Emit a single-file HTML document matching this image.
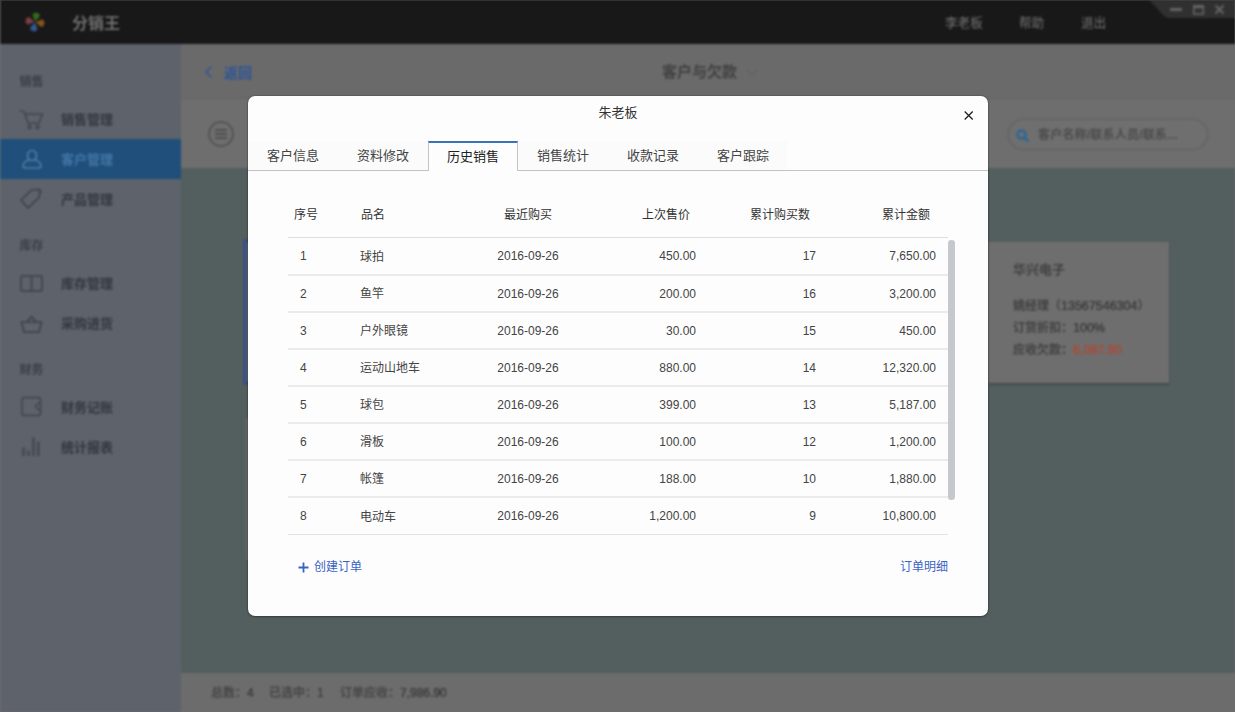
<!DOCTYPE html>
<html lang="zh-CN">
<head>
<meta charset="utf-8">
<title>分销王</title>
<style>
*{box-sizing:border-box;margin:0;padding:0}
html,body{width:1235px;height:712px;overflow:hidden;background:#535e5e}
body{font-family:"Liberation Sans","Noto Sans CJK SC",sans-serif;position:relative}
#bg{position:absolute;left:-10px;top:-10px;width:1255px;height:732px;filter:blur(.9px);background:#535e5e}
#bg .abs{position:absolute}
#topbar{left:0;top:0;width:1255px;height:54px;background:#181818}
#side{left:0;top:54px;width:191px;height:678px;background:#5d626b}
#head{left:191px;top:54px;width:1064px;height:55px;background:#6a6a6a;border-bottom:1px solid #646464}
#tool{left:191px;top:109px;width:1064px;height:69px;background:#6e6e6e}
#foot{left:191px;top:683px;width:1064px;height:50px;background:#6c6c6c}
.t{position:absolute;white-space:nowrap;line-height:1}
.sec{font-size:12px;color:#3b3f46;font-weight:bold;left:29.500px}
.it{font-size:13px;color:#33373d;font-weight:bold;left:71px}
#sel{left:0;top:149px;width:191px;height:40px;background:#1f4f7a}
#modal{position:absolute;left:248px;top:96px;width:740px;height:520px;background:#fdfdfd;border-radius:7px;box-shadow:0 0 1.500px rgba(0,0,0,.55),0 1px 2px rgba(0,0,0,.25)}
#mtitle{position:absolute;left:0;width:740px;top:9px;text-align:center;font-size:13px;line-height:16px;color:#333}
#close{position:absolute;left:715px;top:14px}
#tabs{position:absolute;left:0;top:45px;width:740px;height:30px;border-bottom:1px solid #c3c3c3}
#tabs .strip{position:absolute;left:0;top:0;width:539px;height:29px;background:#fbfbfb}
.tab{position:absolute;top:0;height:30px;width:90px;text-align:center;font-size:13px;line-height:30px;color:#444}
.tab.on{background:#fdfdfd;border:1px solid #c3c3c3;border-top:2px solid #3a74b8;border-bottom:none;color:#222;line-height:27px;height:30px}
table{position:absolute;left:40px;top:104px;width:660px;border-collapse:separate;border-spacing:0;table-layout:fixed;font-size:12px;color:#444}
th{font-weight:normal;height:38px;color:#333;border-bottom:1px solid #dedede;padding-bottom:11px;box-sizing:border-box}
td{height:37px;border-bottom:2px solid #ebebeb;box-sizing:border-box}
tr:first-child td{height:38px}
tr:last-child td{border-bottom:1px solid #e3e3e3}
.c1{width:70px;text-align:left;padding-left:6px}
td.c1{padding-left:12px}
td.c2{padding-bottom:2px}
.c2{width:100px;text-align:left;padding-left:2px}
.c3{text-align:center;width:140px}
.c4{width:98px}.c5{width:120px}.c6{width:132px}
.r{text-align:right}
th.c4,th.c5{padding-right:6px}
th.c6{padding-right:18px}
td.c6{padding-right:12px}
#sb{position:absolute;left:700px;top:144px;width:6.500px;height:260px;border-radius:3.250px;background:#c5c9cd}
.ft{top:697px;font-size:12px;font-weight:bold;color:#454545}
.ft .n{font-size:12px}
.n{font-weight:normal;font-size:12.500px;color:#383838;text-shadow:0 0 .5px #383838}
.lnk{position:absolute;font-size:12px;color:#3a62c4;line-height:14px;top:464px}
th.c2{padding-left:3px}
</style>
</head>
<body>
<div id="bg">
  <div class="abs" id="topbar"></div>
  <div class="abs" id="side"></div>
  <div class="abs" id="sel"></div>
  <div class="abs" id="head"></div>
  <div class="abs" id="tool"></div>
  <div class="abs" id="foot"></div>

  <!-- top bar -->
  <svg class="abs" style="left:33px;top:19.800px" width="24" height="24" viewBox="0 0 24 24">
    <g transform="translate(12 12) scale(.9) rotate(10) translate(-12 -12)">
    <path d="M12 11.500 L8 5 Q8 1.500 12 1.500 Q16 1.500 16 5 Z" fill="#336b19"/>
    <path d="M12.500 12 L19 8 Q22.500 8 22.500 12 Q22.500 16 19 16 Z" fill="#87531b"/>
    <path d="M12 12.500 L16 19 Q16 22.500 12 22.500 Q8 22.500 8 19 Z" fill="#325a93"/>
    <path d="M11.500 12 L5 16 Q1.500 16 1.500 12 Q1.500 8 5 8 Z" fill="#7f3d43"/>
    </g>
  </svg>
  <div class="t" style="left:82px;top:26px;font-size:16px;font-weight:bold;color:#6f6f6f">分销王</div>
  <div class="t" style="left:955px;top:26.700px;font-size:12.600px;color:#757575">李老板</div>
  <div class="t" style="left:1029px;top:26.700px;font-size:12.600px;color:#757575">帮助</div>
  <div class="t" style="left:1091px;top:26.700px;font-size:12.600px;color:#757575">退出</div>
  <svg class="abs" style="left:1155px;top:10px" width="100" height="18" viewBox="0 0 100 18">
    <path d="M4 0 H100 V18.500 H27 Q19.500 18.500 14.500 11 Z" fill="#303030"/>
    <rect x="25" y="8" width="12" height="3" fill="#646464"/>
    <rect x="48.800" y="6" width="9.500" height="8" fill="none" stroke="#646464" stroke-width="1.600"/>
    <rect x="48" y="5.200" width="11" height="3" fill="#646464"/>
    <path d="M70.500 5.500 L78.500 13.500 M78.500 5.500 L70.500 13.500" stroke="#646464" stroke-width="2.200"/>
  </svg>

  <!-- sidebar -->
  <div class="t sec" style="top:86px">销售</div>
  <div class="t it" style="top:123px">销售管理</div>
  <div class="t it" style="top:163px;color:#4676a6">客户管理</div>
  <div class="t it" style="top:203px">产品管理</div>
  <div class="t sec" style="top:250px">库存</div>
  <div class="t it" style="top:287px">库存管理</div>
  <div class="t it" style="top:327px">采购进货</div>
  <div class="t sec" style="top:374px">财务</div>
  <div class="t it" style="top:411px">财务记账</div>
  <div class="t it" style="top:451px">统计报表</div>

  <!-- icons -->
  <svg class="abs" style="left:28px;top:118px" width="28" height="24" viewBox="0 0 28 24" fill="none" stroke="#3c4047" stroke-width="1.250" stroke-linecap="round" stroke-linejoin="round">
    <path d="M2 2.500 L6 3.500 L10 15 H21 L24.500 6 H8"/><circle cx="11.500" cy="19" r="1.600"/><circle cx="19.500" cy="19" r="1.600"/>
  </svg>
  <svg class="abs" style="left:30px;top:158px" width="24" height="24" viewBox="0 0 24 24" fill="none" stroke="#6b8fb9" stroke-width="1.100" stroke-linecap="round" stroke-linejoin="round">
    <ellipse cx="12" cy="7.500" rx="4.500" ry="5.200"/><path d="M8.500 12 Q3 14 3 18 Q3 20 6 20 H18 Q21 20 21 18 Q21 14 15.500 12"/>
  </svg>
  <svg class="abs" style="left:29px;top:197px" width="26" height="24" viewBox="0 0 26 24" fill="none" stroke="#3c4047" stroke-width="1.500" stroke-linejoin="round">
    <path d="M2 13 L12.500 3 L20 2.500 Q21.500 2.500 21 4.500 L20 10.500 L9 21 Z"/><path d="M19 2 L22.500 5.500"/>
  </svg>
  <svg class="abs" style="left:29px;top:283px" width="26" height="22" viewBox="0 0 26 22" fill="none" stroke="#3c4047" stroke-width="1.500" stroke-linejoin="round">
    <rect x="2" y="3" width="21" height="15" rx="1"/><path d="M12.500 3 V18"/>
  </svg>
  <svg class="abs" style="left:29px;top:324px" width="26" height="22" viewBox="0 0 26 22" fill="none" stroke="#3c4047" stroke-width="1.500" stroke-linejoin="round" stroke-linecap="round">
    <path d="M2.500 8 H22.500 L20 18 H5 Z"/><path d="M8 8 L12.500 2.500 L17 8"/>
  </svg>
  <svg class="abs" style="left:29.500px;top:405px" width="24" height="24" viewBox="0 0 24 24" fill="none" stroke="#40444b" stroke-width="1.500" stroke-linejoin="round">
    <rect x="2" y="2.500" width="18.500" height="18" rx="2.500"/><path d="M20.500 8.500 H18 L15.500 11.500 L18 14.500 H20.500" stroke-width="1.300"/>
  </svg>
  <svg class="abs" style="left:30px;top:446px" width="24" height="24" viewBox="0 0 24 24" fill="none" stroke="#454950" stroke-width="2.600">
    <path d="M3.600 11.500 V20 M8.500 14.500 V20 M13.400 1.500 V20 M18.300 5.500 V20"/>
  </svg>

  <!-- header -->
  <svg class="abs" style="left:214px;top:75px" width="10" height="14" viewBox="0 0 10 14" fill="none" stroke="#2d559a" stroke-width="1.500"><path d="M7.500 1.500 L2 7 L7.500 12.500"/></svg>
  <div class="t" style="left:234px;top:76px;font-size:14px;font-weight:bold;color:#2c5597">返回</div>
  <div class="t" style="left:672px;top:74px;font-size:15px;font-weight:bold;color:#404040">客户与欠款</div>
  <svg class="abs" style="left:756px;top:79px" width="12" height="8" viewBox="0 0 12 8" fill="none" stroke="#616161" stroke-width="1.300"><path d="M1.500 1.500 L6 6 L10.500 1.500"/></svg>

  <!-- toolbar -->
  <svg class="abs" style="left:217px;top:130px" width="28" height="28" viewBox="0 0 28 28" fill="none" stroke="#4e4e4e" stroke-width="1.600">
    <circle cx="14" cy="14" r="12"/><path d="M8 10 H20 M8 14 H20 M8 18 H20" stroke-width="1.800"/>
  </svg>
  <div class="abs" style="left:1018px;top:129px;width:200px;height:31px;border:1.500px solid #626262;border-radius:16px;background:#6f6f6f;box-shadow:0 0 2px rgba(0,0,0,.10)"></div>
  <svg class="abs" style="left:1024.500px;top:137.500px" width="16" height="16" viewBox="0 0 16 16" fill="none" stroke="#2b6599" stroke-width="2.400"><circle cx="6.500" cy="6.500" r="4"/><path d="M9.500 9.500 L13.500 13.500"/></svg>
  <div class="t" style="left:1048px;top:139px;font-size:12px;font-weight:bold;color:#4b4b4b;letter-spacing:.2px">客户名称/联系人员/联系...</div>

  <!-- cards -->
  <div class="abs" style="left:253px;top:249px;width:187px;height:146px;background:#6e6e6e;border:4px solid #3a507f"></div>
  <div class="abs" style="left:256px;top:428px;width:180px;height:142px;background:#666a6a"></div>
  <div class="abs" style="left:998px;top:252px;width:181px;height:141px;background:#6e6e6e;box-shadow:0 2px 2px rgba(0,0,0,.22)"></div>
  <div class="t" style="left:1023px;top:273px;font-size:13px;font-weight:bold;color:#404040">华兴电子</div>
  <div class="t" style="left:1023px;top:310px;font-size:12px;font-weight:bold;color:#404040">姚经理（<span class="n">13567546304</span>）</div>
  <div class="t" style="left:1023px;top:332px;font-size:12px;font-weight:bold;color:#404040">订货折扣：<span class="n">100%</span></div>
  <div class="t" style="left:1023px;top:354px;font-size:12px;font-weight:bold;color:#404040">应收欠款：<span class="n" style="color:#b5452f;text-shadow:0 0 .6px #b5452f">6,087.90</span></div>

  <!-- footer -->
  <div class="t ft" style="left:221px">总数：<span class="n">4</span></div>
  <div class="t ft" style="left:279px">已选中：<span class="n">1</span></div>
  <div class="t ft" style="left:350px">订单应收：<span class="n">7,986.90</span></div>
</div>
<div style="position:absolute;left:0;top:0;width:1235px;height:712px;box-shadow:inset 0 0 0 1px rgba(110,110,110,.3),inset 2px 0 0 0 rgba(120,120,120,.15)"></div>
<div id="modal">
  <div id="mtitle">朱老板</div>
  <svg id="close" width="11" height="11" viewBox="0 0 11 11" fill="none" stroke="#1c1c1c" stroke-width="1.250"><path d="M1.700 1.500 L9.700 9.500 M9.700 1.500 L1.700 9.500"/></svg>
  <div id="tabs">
    <div class="strip"></div>
    <div class="tab" style="left:0">客户信息</div>
    <div class="tab" style="left:90px">资料修改</div>
    <div class="tab on" style="left:180px">历史销售</div>
    <div class="tab" style="left:270px">销售统计</div>
    <div class="tab" style="left:360px">收款记录</div>
    <div class="tab" style="left:450px">客户跟踪</div>
  </div>
  <table>
    <thead>
      <tr><th class="c1">序号</th><th class="c2">品名</th><th class="c3">最近购买</th><th class="r c4">上次售价</th><th class="r c5">累计购买数</th><th class="r c6">累计金额</th></tr>
    </thead>
    <tbody>
      <tr><td class="c1">1</td><td class="c2">球拍</td><td class="c3">2016-09-26</td><td class="r c4">450.00</td><td class="r c5">17</td><td class="r c6">7,650.00</td></tr>
      <tr><td class="c1">2</td><td class="c2">鱼竿</td><td class="c3">2016-09-26</td><td class="r c4">200.00</td><td class="r c5">16</td><td class="r c6">3,200.00</td></tr>
      <tr><td class="c1">3</td><td class="c2">户外眼镜</td><td class="c3">2016-09-26</td><td class="r c4">30.00</td><td class="r c5">15</td><td class="r c6">450.00</td></tr>
      <tr><td class="c1">4</td><td class="c2">运动山地车</td><td class="c3">2016-09-26</td><td class="r c4">880.00</td><td class="r c5">14</td><td class="r c6">12,320.00</td></tr>
      <tr><td class="c1">5</td><td class="c2">球包</td><td class="c3">2016-09-26</td><td class="r c4">399.00</td><td class="r c5">13</td><td class="r c6">5,187.00</td></tr>
      <tr><td class="c1">6</td><td class="c2">滑板</td><td class="c3">2016-09-26</td><td class="r c4">100.00</td><td class="r c5">12</td><td class="r c6">1,200.00</td></tr>
      <tr><td class="c1">7</td><td class="c2">帐篷</td><td class="c3">2016-09-26</td><td class="r c4">188.00</td><td class="r c5">10</td><td class="r c6">1,880.00</td></tr>
      <tr><td class="c1">8</td><td class="c2">电动车</td><td class="c3">2016-09-26</td><td class="r c4">1,200.00</td><td class="r c5">9</td><td class="r c6">10,800.00</td></tr>
    </tbody>
  </table>
  <div id="sb"></div>
  <div class="lnk" style="left:50px"><svg width="11" height="11" viewBox="0 0 11 11" style="position:absolute;left:0;top:2px" stroke="#3a62c4" stroke-width="1.800"><path d="M5.500 0.500 V10.500 M0.500 5.500 H10.500"/></svg><span style="margin-left:16px">创建订单</span></div>
  <div class="lnk" style="right:40px">订单明细</div>
</div>
</body>
</html>
